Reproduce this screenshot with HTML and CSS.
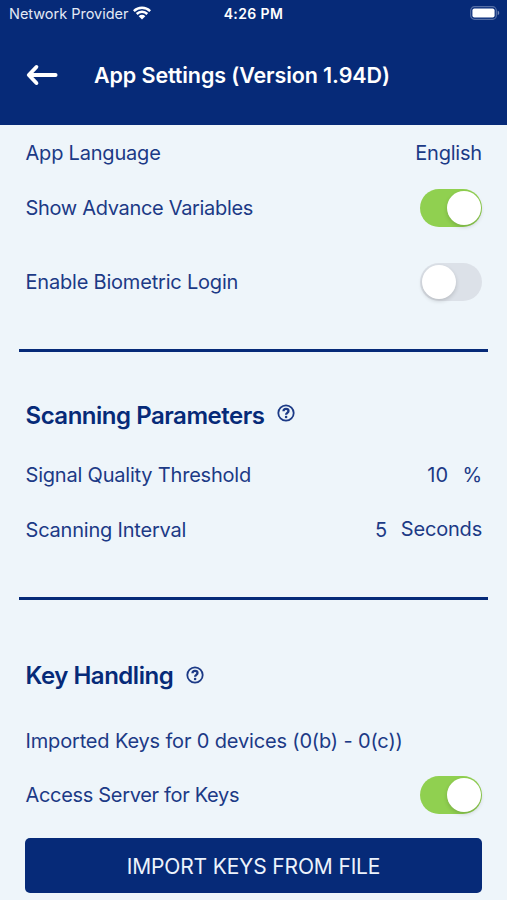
FILE: index.html
```html
<!DOCTYPE html>
<html lang="en">
<head>
<meta charset="utf-8">
<title>App Settings</title>
<link rel="stylesheet" href="styles.css">
</head>
<body>
<header class="header">
  <div class="status">
    <div class="carrier"><span class="carrier-name">Network Provider</span>
      <svg class="wifi" viewBox="0 0 18 14" width="18" height="14"><path d="M.8 5.1a11.6 11.6 0 0 1 16.4 0M3.7 8a7.5 7.5 0 0 1 10.6 0" fill="none" stroke="#fff" stroke-width="2.5"/><path d="M9 13.6 5.7 10.2a4.7 4.7 0 0 1 6.6 0Z" fill="#fff"/></svg>
    </div>
    <span class="clock">4:26 PM</span>
    <svg class="battery" viewBox="0 0 30 14" width="30" height="14"><rect x=".7" y=".7" width="25.6" height="12.6" rx="3.8" fill="none" stroke="#566fa6" stroke-width="1.2"/><rect x="2.4" y="2.4" width="22.2" height="9.2" rx="2" fill="#fff"/><path d="M27.7 4.8c2 .6 2 3.8 0 4.4Z" fill="#7689b6"/></svg>
  </div>
  <div class="titlebar">
    <svg class="back" viewBox="0 0 32 22" width="32" height="22"><path d="M29.6 11H4M10.4 3 2.8 11l7.6 8" fill="none" stroke="#fff" stroke-width="3.9" stroke-linecap="round" stroke-linejoin="round"/></svg>
    <h1 class="title">App Settings (Version 1.94D)</h1>
  </div>
</header>
<main>
  <section class="general">
    <div class="row"><span>App Language</span><span>English</span></div>
    <div class="row"><span class="tight">Show Advance Variables</span><span class="switch on"></span></div>
    <div class="row bio"><span>Enable Biometric Login</span><span class="switch"></span></div>
  </section>
  <section class="scanning">
    <h2 class="heading"><span>Scanning Parameters</span>
      <svg class="help" viewBox="0 0 18 18" width="18" height="18"><circle cx="9" cy="9" r="7.7"/><path class="hook" d="M6.5 7.3c0-3.2 5-3 5-.2 0 1.8-2.4 1.7-2.4 3.6"/><circle class="dot" cx="9.1" cy="13" r="1.3"/></svg>
    </h2>
    <div class="row"><span>Signal Quality Threshold</span><span class="value"><span class="ten">10</span><span>%</span></span></div>
    <div class="row"><span>Scanning Interval</span><span class="value"><span class="five">5</span><span>Seconds</span></span></div>
  </section>
  <section class="keys">
    <h2 class="heading"><span>Key Handling</span>
      <svg class="help" viewBox="0 0 18 18" width="18" height="18"><circle cx="9" cy="9" r="7.7"/><path class="hook" d="M6.5 7.3c0-3.2 5-3 5-.2 0 1.8-2.4 1.7-2.4 3.6"/><circle class="dot" cx="9.1" cy="13" r="1.3"/></svg>
    </h2>
    <div class="row imported"><span>Imported Keys for 0 devices (0(b) - 0(c))</span></div>
    <div class="row access"><span class="tight">Access Server for Keys</span><span class="switch on"></span></div>
    <button class="button">IMPORT KEYS FROM FILE</button>
  </section>
</main>
</body>
</html>
```
FILE: styles.css
```css
* { box-sizing: border-box; }
body {
  margin: 0;
  height: 900px;
  overflow: hidden;
  background: #eef5fa;
  color: #1c3a86;
  font-family: Inter, "Liberation Sans", sans-serif;
  font-size: 20px;
  letter-spacing: -0.2px;
  white-space: nowrap;
}
.header { height: 125px; background: #062a78; color: #fff; }
.status {
  display: grid;
  grid-template-columns: 1fr auto 1fr;
  align-items: center;
  height: 27px;
  padding: 0 7px 0 9px;
}
.carrier { display: flex; align-items: center; gap: 5px; color: #e3e9f5; font-size: 14.5px; letter-spacing: -0.02px; }
.wifi { margin-top: -1px; }
.clock { margin-left: -2px; font-size: 14px; font-weight: 600; letter-spacing: 0.4px; }
.battery { justify-self: end; margin-top: -1px; }
.titlebar { display: flex; align-items: center; height: 96px; padding-left: 26px; }
.title { margin: 0 0 0 36px; font-size: 21.5px; font-weight: 600; letter-spacing: -0.1px; }
.general, .scanning { margin: 0 19px; padding: 0 6px 0 6.5px; border-bottom: 3px solid #062a78; }
.general { height: 227px; }
.scanning { height: 248px; padding-top: 36px; }
.keys { padding: 48px 25px 0 25.5px; }
.row { display: flex; align-items: center; justify-content: space-between; height: 55px; }
.tight { letter-spacing: -0.32px; }
.bio { margin-top: 19px; }
.heading { display: flex; align-items: center; gap: 13px; height: 54px; margin: 0; color: #062a78; font-size: 24px; font-weight: 600; letter-spacing: -0.48px; }
.scanning .heading { margin-bottom: 5px; }
.scanning .help { margin-top: -5px; }
.keys .heading { margin-bottom: 11px; }
.help { fill: none; stroke: #1c3a86; stroke-width: 1.8; }
.help .hook { stroke-width: 2.3; }
.help .dot { fill: #1c3a86; stroke: none; }
.imported { letter-spacing: -0.16px; }
.access { height: 54px; }
.value { display: flex; gap: 14px; }
.ten { letter-spacing: 0.3px; }
.five { padding-top: 1px; }
.switch { width: 62px; height: 38px; padding: 2px; border-radius: 19px; background: #dce1e8; }
.switch::before { content: ""; display: block; width: 34px; height: 34px; border-radius: 50%; background: #fff; box-shadow: 0 2px 4px rgba(0, 0, 0, .16); }
.switch.on { background: #90d050; }
.switch.on::before { margin-left: 24.5px; }
.button { display: block; width: 457px; height: 55px; margin: 16px 0 0 -0.5px; padding: 2px 0 0; border: 0; border-radius: 5px; background: #062a78; color: #edf3fc; font: inherit; font-size: 21px; letter-spacing: -0.35px; word-spacing: 0; letter-spacing: -0.15px; }
```
